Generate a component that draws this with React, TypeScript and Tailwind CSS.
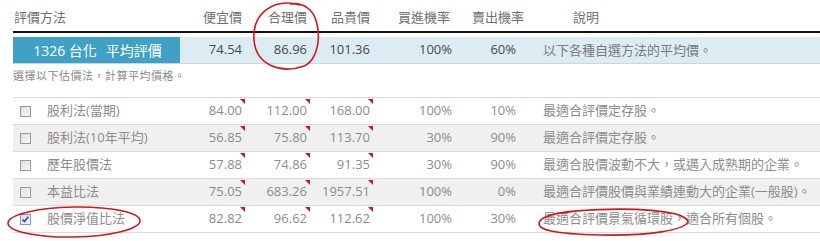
import React from 'react';

// ─── Données ───────────────────────────────────────────────────────────────

type Row = {
  checked: boolean;
  name: string;
  cheap: string;
  fair: string;
  exp: string;
  buy: string;
  sell: string;
  note: string;
};

const ROWS: Row[] = [
  { checked: false, name: '股利法(當期)', cheap: '84.00', fair: '112.00', exp: '168.00', buy: '100%', sell: '10%', note: '最適合評價定存股。' },
  { checked: false, name: '股利法(10年平均)', cheap: '56.85', fair: '75.80', exp: '113.70', buy: '30%', sell: '90%', note: '最適合評價定存股。' },
  { checked: false, name: '歷年股價法', cheap: '57.88', fair: '74.86', exp: '91.35', buy: '30%', sell: '90%', note: '最適合股價波動不大，或邁入成熟期的企業。' },
  { checked: false, name: '本益比法', cheap: '75.05', fair: '683.26', exp: '1957.51', buy: '100%', sell: '0%', note: '最適合評價股價與業績連動大的企業(一般股)。' },
  { checked: true, name: '股價淨值比法', cheap: '82.82', fair: '96.62', exp: '112.62', buy: '100%', sell: '30%', note: '最適合評價景氣循環股，適合所有個股。' },
];

const GRID = 'grid grid-cols-[167px_66px_65px_63px_82px_64px_1fr]';

// ─── Petits éléments ───────────────────────────────────────────────────────

function Checkbox({ checked }: { checked: boolean }) {
  return (
    <svg width="11" height="11" viewBox="0 0 11 11" className="shrink-0">
      <defs>
        <linearGradient id={checked ? 'cbOn' : 'cbOff'} x1="0" y1="0" x2="1" y2="1">
          <stop offset="0" stopColor={checked ? '#d6def2' : '#dedede'} />
          <stop offset="1" stopColor={checked ? '#f4f6ff' : '#f8f8f8'} />
        </linearGradient>
      </defs>
      <rect x="0.5" y="0.5" width="10" height="10" fill={`url(#${checked ? 'cbOn' : 'cbOff'})`} stroke={checked ? '#8a93b5' : '#9a9a9a'} />
      {checked && <path d="M2.6 5.6 L4.5 7.6 L8.4 2.8" fill="none" stroke="#3a4a8c" strokeWidth="1.6" />}
    </svg>
  );
}

// Coin rouge façon "commentaire Excel"
function Cell({ value, mark = false }: { value: string; mark?: boolean }) {
  return (
    <div className="relative flex items-center justify-end pr-[4px]">
      {mark && (
        <svg width="5" height="5" viewBox="0 0 5 5" className="absolute top-[1px] right-[1px]">
          <polygon points="0,0 5,0 5,5" fill="#d0141c" />
        </svg>
      )}
      {value}
    </div>
  );
}

// ─── Composant principal ───────────────────────────────────────────────────

export default function App() {
  return (
    <div
      lang="zh-Hant-TW"
      className="relative w-[820px] h-[241px] overflow-hidden bg-white font-['Open_Sans','Noto_Sans_CJK_TC',sans-serif] text-[13px]"
    >
      <div className="ml-[13px] w-[807px]">
        {/* En-tête */}
        <div className={`${GRID} h-[33px] border-b-2 border-[#111] text-[#707070] items-end pb-[5px] leading-[18px]`}>
          <div className="pl-[1px]">評價方法</div>
          <div className="text-right pr-[4px]">便宜價</div>
          <div className="text-right pr-[4px]">合理價</div>
          <div className="text-right pr-[4px]">品貴價</div>
          <div className="pl-[24px]">買進機率</div>
          <div className="pl-[16px] whitespace-nowrap">賣出機率</div>
          <div className="pl-[53px]">說明</div>
        </div>

        {/* Ligne moyenne */}
        <div className={`${GRID} mt-[4px] h-[27px] bg-[#dcecf3] border-b border-[#cdd6da] text-[#4a4a4a] text-[13px]`}>
          <div className="flex items-center justify-center bg-[#3fa1c6] text-white text-[14px] gap-[9px] pl-[2px]">
            <span>1326 台化</span>
            <span>平均評價</span>
          </div>
          <Cell value="74.54" />
          <Cell value="86.96" />
          <Cell value="101.36" />
          <Cell value="100%" />
          <Cell value="60%" />
          <div className="flex items-center pl-[23px] text-[#7a7a7a] whitespace-nowrap font-['Noto_Sans_CJK_TC',sans-serif]">以下各種自選方法的平均價。</div>
        </div>

        <div className="h-[33px] pt-[4px] text-[11px] leading-[14px] text-[#8a8a8a] tracking-[0.5px] font-['Noto_Sans_CJK_TC',sans-serif]">
          選擇以下估價法，計算平均價格。
        </div>

        {/* Méthodes */}
        <div className="border-t border-[#dcdcdc] text-[#8c8c8c]">
          {ROWS.map((r, i) => (
            <div
              key={r.name}
              className={`${GRID} h-[27px] border-b border-[#dcdcdc] ${i % 2 === 1 ? 'bg-[#f0f0f0]' : 'bg-white'}`}
            >
              <div className="flex items-center gap-[16px] pl-[7px]">
                <Checkbox checked={r.checked} />
                <span>{r.name}</span>
              </div>
              <Cell value={r.cheap} mark />
              <Cell value={r.fair} mark />
              <Cell value={r.exp} mark />
              <Cell value={r.buy} />
              <Cell value={r.sell} />
              <div className="flex items-center pl-[23px] whitespace-nowrap">{r.note}</div>
            </div>
          ))}
        </div>
      </div>

      {/* Annotations rouges */}
      <svg width="820" height="241" className="absolute top-0 left-0 pointer-events-none">
        <path d="M300 5 C 275 -2, 252 12, 254 40 C 256 66, 282 74, 304 66 C 322 58, 322 22, 310 10 C 304 4, 296 3, 290 4" fill="none" stroke="#d5141c" strokeWidth="1.6" />
        <ellipse cx="74" cy="222" rx="66" ry="15" fill="none" stroke="#d5141c" strokeWidth="1.6" transform="rotate(-1 74 222)" />
        <path d="M540 221 C 548 208, 640 206, 676 214 C 684 216, 688 220, 688 222 C 684 230, 650 236, 600 235 C 556 234, 534 230, 540 221 Z" fill="none" stroke="#d5141c" strokeWidth="1.6" />
      </svg>
    </div>
  );
}
